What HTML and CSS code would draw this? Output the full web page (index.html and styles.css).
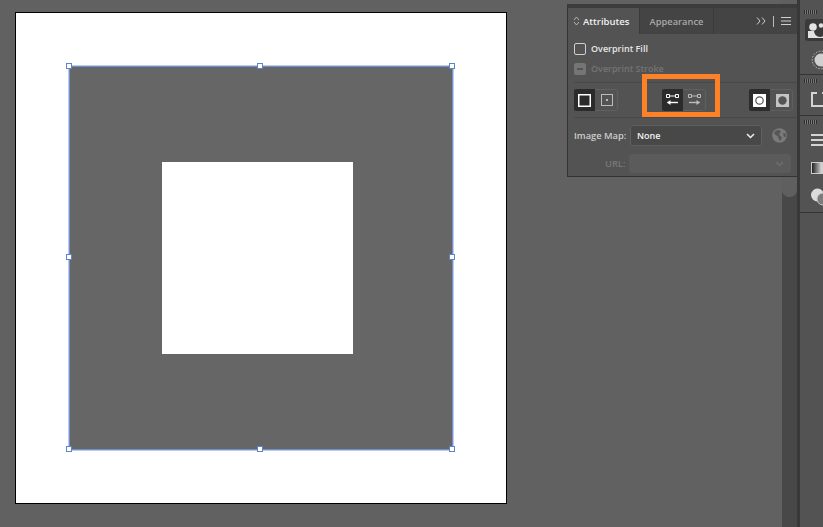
FILE: index.html
```html
<!DOCTYPE html>
<html lang="en">
<head>
    <meta charset="UTF-8">
    <title>Attributes panel</title>
    <link rel="stylesheet" href="styles.css">
</head>
<body>
    <div class="artboard">
        <div class="shape">
            <div class="hole"></div>
        </div>
        <span class="handle h-tl"></span>
        <span class="handle h-tm"></span>
        <span class="handle h-tr"></span>
        <span class="handle h-ml"></span>
        <span class="handle h-mr"></span>
        <span class="handle h-bl"></span>
        <span class="handle h-bm"></span>
        <span class="handle h-br"></span>
    </div>

    <div class="scroll-col">
        <div class="scroll-thumb"></div>
    </div>

    <div class="panel">
        <div class="tabs">
            <div class="tab tab-active">
                <svg class="updown" width="7" height="10" viewBox="0 0 7 10"><path d="M1 4 3.500 1 6 4M1 6l2.500 3L6 6" fill="none" stroke="#b5b5b5"/></svg>
                Attributes
            </div>
            <div class="tab">Appearance</div>
            <div class="tab-tools">
                <svg width="10" height="8" viewBox="0 0 10 8"><path d="M1 .5 4 4 1 7.500M6 .5 9 4 6 7.500" fill="none" stroke="#cfcfcf"/></svg>
                <span class="tool-sep"></span>
                <svg width="10" height="8" viewBox="0 0 10 8"><path d="M0 .5h10M0 4h10M0 7.500h10" stroke="#cfcfcf"/></svg>
            </div>
        </div>
        <div class="panel-body">
            <label class="check-row">
                <span class="check"></span>
                Overprint Fill
            </label>
            <label class="check-row check-off">
                <span class="check check-mixed"></span>
                Overprint Stroke
            </label>
            <div class="btn-row">
                <div class="btn-group">
                    <div class="seg seg-on">
                        <svg width="13" height="13" viewBox="0 0 13 13"><rect x=".75" y=".75" width="11.500" height="11.500" fill="none" stroke="#fff" stroke-width="1.500"/></svg>
                    </div>
                    <div class="seg">
                        <svg width="12" height="12" viewBox="0 0 12 12"><rect x=".5" y=".5" width="11" height="11" fill="none" stroke="#bbb"/><rect x="5" y="5" width="2" height="2" fill="#bbb"/></svg>
                    </div>
                </div>
                <div class="btn-group">
                    <div class="seg seg-on">
                        <svg width="13" height="12" viewBox="0 0 13 12"><path d="M3.500 2h6" stroke="#fff"/><path d="M.5.500h3v3h-3zM9.500.5h3v3h-3z" fill="none" stroke="#fff"/><path d="M1.500 8.500H12" stroke="#fff" stroke-width="1.400"/><path d="M4.500 6 1 8.500 4.500 11z" fill="#fff"/></svg>
                    </div>
                    <div class="seg">
                        <svg width="13" height="12" viewBox="0 0 13 12"><path d="M3.500 2h6" stroke="#bbb"/><path d="M.5.500h3v3h-3zM9.500.5h3v3h-3z" fill="none" stroke="#bbb"/><path d="M1 8.500h10.500" stroke="#bbb" stroke-width="1.400"/><path d="M8.500 6 12 8.500 8.500 11z" fill="#bbb"/></svg>
                    </div>
                </div>
                <div class="btn-group">
                    <div class="seg seg-on">
                        <svg width="13" height="13" viewBox="0 0 13 13"><rect width="13" height="13" fill="#fff"/><circle cx="6.500" cy="6.500" r="3.700" fill="#fff" stroke="#555" stroke-width="1.200"/></svg>
                    </div>
                    <div class="seg">
                        <svg width="13" height="13" viewBox="0 0 13 13"><rect width="13" height="13" fill="#c4c4c4"/><circle cx="6.500" cy="6.500" r="4.200" fill="#555"/></svg>
                    </div>
                </div>
            </div>
            <div class="field-row">
                <span class="field-label">Image Map:</span>
                <div class="select">
                    None
                    <svg width="9" height="6" viewBox="0 0 9 6"><path d="M1 1 4.500 4.500 8 1" fill="none" stroke="#eee" stroke-width="1.500"/></svg>
                </div>
                <svg class="globe" width="15" height="15" viewBox="0 0 15 15"><circle cx="7.500" cy="7.500" r="7.300" fill="#7a7a7a"/><path d="M4 2.500 7.500 2 9 4 7 6 8 8 10 9 8.500 13 7 11.500 6 8.500 3 6.500 2 5zM11 5l2.500.5.500 3-2 .5z" fill="#565656"/></svg>
            </div>
            <div class="field-row field-off">
                <span class="field-label">URL:</span>
                <div class="select select-off">
                    <svg width="9" height="6" viewBox="0 0 9 6"><path d="M1 1 4.500 4.500 8 1" fill="none" stroke="#6e6e6e" stroke-width="1.500"/></svg>
                </div>
            </div>
        </div>
    </div>

    <!-- orange highlight over the panel -->
    <div class="callout"></div>

    <div class="dock">
        <div class="dock-group">
            <div class="grip"></div>
            <div class="dock-btn">
                <svg width="18" height="16" viewBox="0 0 18 16"><circle cx="5" cy="5" r="3.800" fill="#e2e2e2"/><path d="M0 9h6a5 5 0 0 0 12 0v7H0z" fill="#e2e2e2"/><circle cx="13" cy="3.500" r="2.200" fill="#e2e2e2"/></svg>
            </div>
            <svg class="dock-icon" width="18" height="20" viewBox="0 0 18 20"><circle cx="10" cy="10" r="6.500" fill="#d0d0d0"/><circle cx="10" cy="10" r="8.800" fill="none" stroke="#c0c0c0" stroke-dasharray="1.500 1.500"/></svg>
        </div>
        <div class="dock-group dock-short">
            <div class="grip"></div>
            <svg class="dock-icon" width="18" height="15" viewBox="0 0 18 15"><path d="M6 1H1v13h12M11 1h7" fill="none" stroke="#d4d4d4" stroke-width="2"/></svg>
        </div>
        <div class="dock-group dock-tall">
            <div class="grip"></div>
            <svg class="dock-icon dock-lines" width="18" height="12" viewBox="0 0 18 12"><path d="M0 1h18M0 6h18M0 11h18" stroke="#d4d4d4" stroke-width="2"/></svg>
            <div class="gradient-swatch"></div>
            <svg class="dock-icon dock-circles" width="18" height="18" viewBox="0 0 18 18"><circle cx="6.500" cy="7" r="6.500" fill="#dcdcdc"/><circle cx="12" cy="11" r="6" fill="#7c7c7c" stroke="#c9c9c9"/></svg>
        </div>
    </div>
</body>
</html>
```

FILE: styles.css
```css
html, body {
    height: 100%;
}
body {
    margin: 0;
    background-color: #616161;
    font-family: "Open Sans", Arial, sans-serif;
    font-size: 10px;
    color: #e6e6e6;
    overflow: hidden;
    position: relative;
}

/* artboard */
.artboard {
    position: absolute;
    left: 15px;
    top: 12px;
    width: 490px;
    height: 490px;
    background-color: #fff;
    border: 1px solid #000;
}
.shape {
    position: absolute;
    left: 53px;
    top: 53px;
    width: 382px;
    height: 382px;
    background-color: #666;
    border: 1px solid #6f8fcf;
    box-shadow: 0 0 0 1px rgba(111, 143, 207, 0.45);
}
.hole {
    position: absolute;
    left: 92px;
    top: 95px;
    width: 191px;
    height: 192px;
    background-color: #fff;
}
.handle {
    position: absolute;
    width: 4px;
    height: 4px;
    background-color: #fff;
    border: 1px solid #5f82c8;
}
.h-tl { left: 50px; top: 50px; }
.h-tm { left: 241px; top: 50px; }
.h-tr { left: 433px; top: 50px; }
.h-ml { left: 50px; top: 241px; }
.h-mr { left: 433px; top: 241px; }
.h-bl { left: 50px; top: 433px; }
.h-bm { left: 241px; top: 433px; }
.h-br { left: 433px; top: 433px; }

/* attributes panel */
.panel {
    position: absolute;
    left: 567px;
    top: 4px;
    width: 230px;
    height: 173px;
    box-sizing: border-box;
    background-color: #535353;
    border: 1px solid #333;
    border-right: 0;
    border-top: 4px solid #3c3c3c;
}
.tabs {
    display: flex;
    height: 26px;
    background-color: #444;
}
.tab {
    display: flex;
    align-items: center;
    justify-content: center;
    width: 73px;
    font-size: 9.300px;
    font-weight: 600;
    color: #a8a8a8;
    border-right: 1px solid #3a3a3a;
}
.tab-active {
    width: 72px;
    box-sizing: border-box;
    justify-content: flex-start;
    gap: 3px;
    padding-left: 5px;
    font-size: 9.500px;
    background-color: #535353;
    color: #f0f0f0;
}
.tab-tools {
    margin-left: auto;
    display: flex;
    align-items: center;
    gap: 7px;
    padding-right: 6px;
}
.tool-sep {
    width: 1px;
    height: 11px;
    background-color: #bbb;
}
.panel-body {
    padding: 8px 6px 0;
}
.check-row {
    display: flex;
    align-items: center;
    gap: 5px;
    height: 13px;
    margin-bottom: 7px;
    font-size: 9px;
    font-weight: 600;
}
.check {
    width: 10px;
    height: 10px;
    border: 1px solid #cfcfcf;
    border-radius: 2px;
}
.check-off {
    color: #747474;
}
.check-mixed {
    background-color: #757575;
    border-color: #757575;
    position: relative;
}
.check-mixed::after {
    content: "";
    position: absolute;
    left: 2px;
    top: 4px;
    width: 6px;
    height: 2px;
    background-color: #535353;
}
.btn-row {
    display: flex;
    justify-content: space-between;
    height: 22px;
    padding: 6px 5px 6px 0;
    border-top: 1px solid #484848;
    border-bottom: 1px solid #484848;
    width: 219px;
}
.btn-group {
    display: flex;
    width: 44px;
    height: 22px;
    box-sizing: border-box;
    border: 1px solid #5f5f5f;
    border-radius: 3px;
}
.seg {
    flex: 1;
    display: flex;
    align-items: center;
    justify-content: center;
    padding-left: 2px;
}
.seg-on {
    flex: 0 0 21px;
    margin: -1px 0 -1px -1px;
    padding-left: 0;
    background-color: #2b2b2b;
    border-radius: 2px 0 0 2px;
}
.field-row {
    display: flex;
    align-items: center;
    gap: 4px;
    margin-top: 7px;
    height: 21px;
}
.field-label {
    width: 52px;
    text-align: left;
    font-size: 9.300px;
    font-weight: 600;
    color: #cdcdcd;
    white-space: nowrap;
}
.select {
    display: flex;
    align-items: center;
    justify-content: space-between;
    box-sizing: border-box;
    width: 132px;
    height: 21px;
    padding: 0 6px;
    background-color: #484848;
    border: 1px solid #5f5f5f;
    border-radius: 3px;
    font-size: 9px;
    font-weight: 600;
    color: #f2f2f2;
}
.globe {
    margin-left: 6px;
}
.field-off {
    margin-top: 8px;
    height: 19px;
}
.field-off .field-label {
    text-align: right;
    color: #777;
}
.select-off {
    width: 163px;
    height: 19px;
    background-color: #5b5b5b;
    border-color: #5b5b5b;
    justify-content: flex-end;
}

.callout {
    position: absolute;
    left: 642px;
    top: 74px;
    width: 68px;
    height: 33px;
    border: 5px solid #ff8127;
}

/* scroll bar beside the dock */
.scroll-col {
    position: absolute;
    left: 782px;
    top: 0;
    bottom: 0;
    width: 15px;
    background-color: #484848;
}
.scroll-thumb {
    height: 197px;
    background-color: #5f5f5f;
    border-radius: 0 0 7px 7px;
}

/* right icon dock */
.dock {
    position: absolute;
    left: 797px;
    top: 0;
    bottom: 0;
    width: 26px;
    box-sizing: border-box;
    background-color: #535353;
    border-left: 3px solid #383838;
}
.dock-group {
    height: 75px;
    box-sizing: border-box;
    padding-top: 10px;
    border-bottom: 1px solid #333;
    overflow: hidden;
}
.dock-short {
    height: 41px;
    padding-top: 4px;
}
.dock-tall {
    height: 97px;
    padding-top: 4px;
}
.grip {
    width: 13px;
    height: 4px;
    margin-left: 4px;
    margin-bottom: 5px;
    background: repeating-linear-gradient(90deg, #2f2f2f 0 1px, #777 1px 2px);
}
.dock-btn {
    width: 18px;
    height: 22px;
    margin-left: 5px;
    display: flex;
    align-items: center;
    padding-left: 3px;
    overflow: hidden;
    background-color: #3a3a3a;
    border-radius: 3px 0 0 3px;
}
.dock-icon {
    display: block;
    margin: 9px 0 0 11px;
}
.dock-lines {
    margin-top: 10px;
}
.dock-circles {
    margin-top: 14px;
}
.gradient-swatch {
    width: 12px;
    height: 12px;
    margin: 16px 0 0 11px;
    border: 1px solid #ccc;
    background: linear-gradient(90deg, #222, #ddd);
    box-sizing: border-box;
}
```
